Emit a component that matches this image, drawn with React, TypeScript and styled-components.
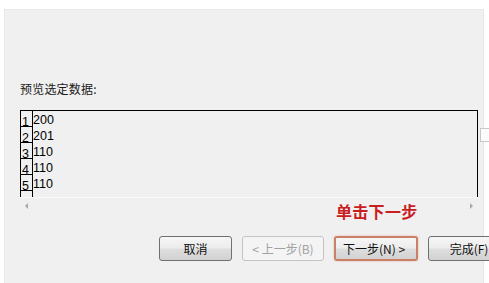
import React from "react";
import styled, { createGlobalStyle } from "styled-components";

const Global = createGlobalStyle`
  html, body { margin: 0; padding: 0; background: #ffffff; }
  #root { width: 489px; height: 283px; overflow: hidden; }
  * { box-sizing: border-box; }
`;

const Page = styled.div`
  width: 489px;
  height: 283px;
  padding: 9px 5px 0 4px;
  background: #ffffff;
  font-family: "Noto Sans CJK SC", "Liberation Sans", sans-serif;
`;

const Panel = styled.div`
  position: relative;
  height: 274px;
  background: #f0f0f0;
  border-left: 1px solid #e8e8e8;
  border-top: 1px solid #e9e9e9;
  border-right: 1px solid #e6e6e6;
  padding: 71px 0 0 15px;
  display: flex;
  flex-direction: column;
`;

const Label = styled.div`
  font-size: 12px;
  line-height: 16px;
  height: 16px;
  color: #1a1a1a;
  letter-spacing: 0.2px;
`;

const BoxRow = styled.div`
  margin-top: 13px;
  display: flex;
  align-items: flex-start;
`;

const Box = styled.div`
  flex: none;
  width: 458px;
  display: flex;
  flex-direction: column;
`;

const Grid = styled.div`
  height: 87px;
  border: 1px solid #000;
  border-bottom: none;
  overflow: hidden;
  background: #f0f0f0;
`;

const Row = styled.div`
  display: flex;
  height: 16px;
`;

const RowNum = styled.div`
  flex: none;
  width: 12px;
  height: 16px;
  border-right: 1px solid #000;
  border-bottom: 1px solid #000;
  font-family: "Liberation Sans", Arial, sans-serif;
  font-size: 12.5px;
  line-height: 15px;
  padding: 4px 0 0 1px;
  color: #000;
`;

const Cell = styled.div`
  font-family: "Liberation Sans", Arial, sans-serif;
  font-size: 12.5px;
  line-height: 14px;
  padding: 2px 0 0 0;
  color: #000;
`;

const HScroll = styled.div`
  height: 21px;
  border-top: 1px solid #fbfbfb;
  display: flex;
  justify-content: space-between;
  align-items: flex-start;
  padding: 5px 5px 0 5px;
`;

const Arrow = styled.div<{ $dir: "left" | "right" }>`
  width: 0;
  height: 0;
  border-top: 3px solid transparent;
  border-bottom: 3px solid transparent;
  ${(p) =>
    p.$dir === "left"
      ? "border-right: 3px solid #a8a8a8;"
      : "border-left: 3px solid #a8a8a8;"}
`;

const VScroll = styled.div`
  flex: none;
  margin: 18px 0 0 2px;
  width: 10px;
  height: 14px;
  border: 1px solid #c8c8c8;
  border-right: none;
  background: #fbfbfb;
`;

const Hint = styled.div`
  position: absolute;
  left: 331px;
  top: 191px;
  font-family: "Noto Sans CJK SC", sans-serif;
  font-weight: 700;
  font-size: 16px;
  line-height: 20px;
  color: #c9201f;
  letter-spacing: 0.3px;
`;

const Buttons = styled.div`
  margin-top: 18px;
  display: flex;
  padding-left: 139px;
  gap: 10px;
`;

const Button = styled.div<{ $w: number; $disabled?: boolean; $focus?: boolean }>`
  flex: none;
  width: ${(p) => p.$w}px;
  height: 25px;
  border-radius: 3px;
  border: ${(p) =>
    p.$focus ? "2px solid #c98064" : p.$disabled ? "1px solid #c4c4c4" : "1px solid #707070"};
  background: ${(p) =>
    p.$disabled
      ? "#f4f4f4"
      : "linear-gradient(#f6f6f6 0%, #ececec 48%, #dedede 52%, #d2d2d2 100%)"};
  box-shadow: ${(p) => (p.$focus ? "0 0 2px rgba(200,120,90,0.5)" : "none")};
  color: ${(p) => (p.$disabled ? "#a2a2a2" : "#111")};
  font-size: 12px;
  line-height: ${(p) => (p.$focus ? 21 : 23)}px;
  text-align: ${(p) => (p.$focus ? "left" : "center")};
  padding-left: ${(p) => (p.$focus ? 7 : 0)}px;
  white-space: nowrap;
  overflow: hidden;
`;

const rows = [
  ["1", "200"],
  ["2", "201"],
  ["3", "110"],
  ["4", "110"],
  ["5", "110"],
  ["6", ""],
];

export default function App() {
  return (
    <>
      <Global />
      <Page>
        <Panel>
          <Label>预览选定数据:</Label>
          <BoxRow>
            <Box>
              <Grid>
                {rows.map(([n, v]) => (
                  <Row key={n}>
                    <RowNum>{n === "6" ? "" : n}</RowNum>
                    <Cell>{v}</Cell>
                  </Row>
                ))}
              </Grid>
              <HScroll>
                <Arrow $dir="left" />
                <Arrow $dir="right" />
              </HScroll>
            </Box>
            <VScroll />
          </BoxRow>
          <Hint>单击下一步</Hint>
          <Buttons>
            <Button $w={73}>取消</Button>
            <Button $w={82} $disabled>
              &lt; 上一步(B)
            </Button>
            <Button $w={84} $focus>
              下一步(N) &gt;
            </Button>
            <Button $w={82}>完成(F)</Button>
          </Buttons>
        </Panel>
      </Page>
    </>
  );
}
